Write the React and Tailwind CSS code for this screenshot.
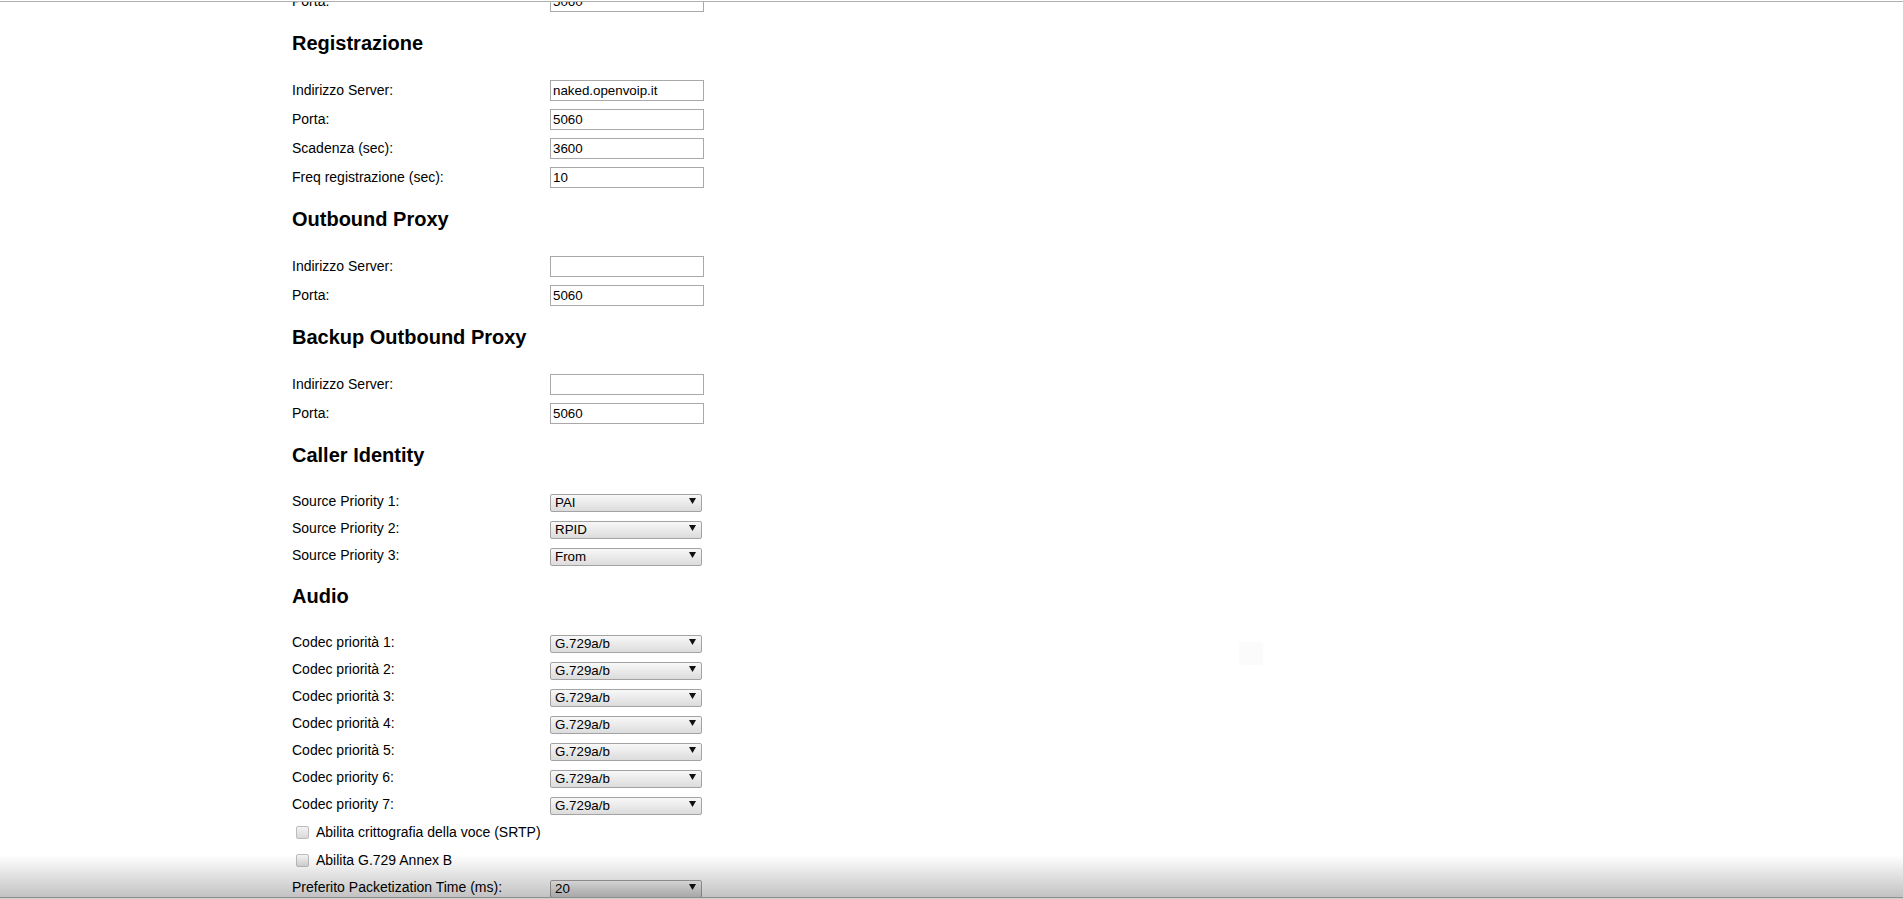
import React from "react";

const Field = ({ label, value }) => (
  <div className="flex h-[29px] items-center">
    <span className="w-[258px] shrink-0">{label}</span>
    <input
      readOnly
      defaultValue={value}
      className="h-[21px] w-[154px] border border-[#a9a9a9] bg-white px-[2px] text-[13.33px] text-black outline-none"
    />
  </div>
);

const Pick = ({ label, value }) => (
  <div className="flex h-[27px] items-center">
    <span className="w-[258px] shrink-0">{label}</span>
    <div className="relative -mt-[1px] h-[18px] w-[152px]">
      <select
        defaultValue={value}
        className="h-full w-full appearance-none rounded-[2px] border border-[#a3a3a3] bg-linear-to-b from-[#f8f8f8] to-[#dcdcdc] pl-[4px] text-[13.33px] leading-none text-black outline-none"
      >
        <option>{value}</option>
      </select>
      <svg
        className="pointer-events-none absolute right-[6px] top-[6px]"
        width="7"
        height="6"
        viewBox="0 0 7 6"
      >
        <path d="M0 0h7L3.5 6z" fill="#111" />
      </svg>
    </div>
  </div>
);

const Check = ({ label }) => (
  <div className="flex h-[28px] items-center">
    <span className="ml-[4px] mr-[7px] h-[13px] w-[13px] shrink-0 rounded-[2px] border border-[#bcbcbc] bg-linear-to-b from-[#f3f3f3] to-[#d9d9d9]" />
    <span>{label}</span>
  </div>
);

const Section = ({ title }) => (
  <h3 className="mb-[21px] mt-[16px] text-[20px] font-bold leading-[23px] text-black">
    {title}
  </h3>
);

const codecs = [
  "Codec priorità 1:",
  "Codec priorità 2:",
  "Codec priorità 3:",
  "Codec priorità 4:",
  "Codec priorità 5:",
  "Codec priority 6:",
  "Codec priority 7:",
];

export default function App() {
  return (
    <div className="relative h-[899px] overflow-hidden bg-white font-['Liberation_Sans',Arial,sans-serif] text-[14px] text-black">
      <div className="-mt-[13px] pl-[292px]">
        <Field label="Porta:" value="5060" />

        <Section title="Registrazione" />
        <Field label="Indirizzo Server:" value="naked.openvoip.it" />
        <Field label="Porta:" value="5060" />
        <Field label="Scadenza (sec):" value="3600" />
        <Field label="Freq registrazione (sec):" value="10" />

        <Section title="Outbound Proxy" />
        <Field label="Indirizzo Server:" value="" />
        <Field label="Porta:" value="5060" />

        <Section title="Backup Outbound Proxy" />
        <Field label="Indirizzo Server:" value="" />
        <Field label="Porta:" value="5060" />

        <Section title="Caller Identity" />
        <Pick label="Source Priority 1:" value="PAI" />
        <Pick label="Source Priority 2:" value="RPID" />
        <Pick label="Source Priority 3:" value="From" />

        <Section title="Audio" />
        {codecs.map((c) => (
          <Pick key={c} label={c} value="G.729a/b" />
        ))}
        <Check label="Abilita crittografia della voce (SRTP)" />
        <Check label="Abilita G.729 Annex B" />
        <Pick label="Preferito Packetization Time (ms):" value="20" />
      </div>

      {/* faint floating square */}
      <div className="absolute left-[1239px] top-[642px] h-[23px] w-[24px] rounded-[3px] bg-[#fbfbfb]" />

      {/* top edge */}
      <div className="absolute left-0 right-0 top-0 h-[2px] border-b border-[#b0b0b0] bg-white" />

      {/* bottom shade */}
      <div className="pointer-events-none absolute bottom-[2px] left-0 right-0 h-[42px] bg-linear-to-b from-[rgba(0,0,0,0)] to-[rgba(0,0,0,0.24)]" />
      <div className="absolute bottom-0 left-0 right-0 h-[2px] border-t border-[#8e8e8e] bg-[#d0d0d0]" />
    </div>
  );
}
